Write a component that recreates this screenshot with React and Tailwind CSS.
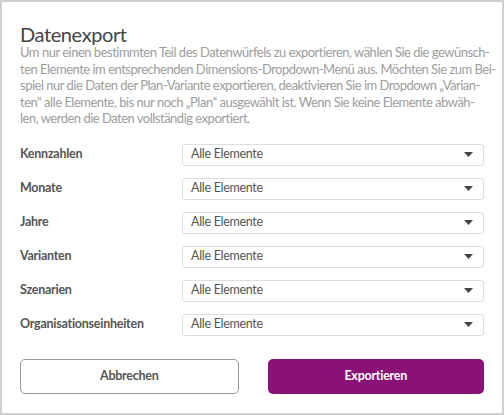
const fields = [
  'Kennzahlen',
  'Monate',
  'Jahre',
  'Varianten',
  'Szenarien',
  'Organisationseinheiten',
];

const intro = [
  'Um nur einen bestimmten Teil des Datenwürfels zu exportieren, wählen Sie die gewünsch-',
  'ten Elemente im entsprechenden Dimensions-Dropdown-Menü aus. Möchten Sie zum Bei-',
  'spiel nur die Daten der Plan-Variante exportieren, deaktivieren Sie im Dropdown „Varian-',
  'ten“ alle Elemente, bis nur noch „Plan“ ausgewählt ist. Wenn Sie keine Elemente abwäh-',
  'len, werden die Daten vollständig exportiert.',
];

function Caret() {
  return (
    <svg width="9" height="5" viewBox="0 0 9 5" className="shrink-0">
      <path d="M0 0 L9 0 L4.5 5 Z" fill="#444" />
    </svg>
  );
}

export default function App() {
  return (
    <div
      className="w-[504px] h-[415px] bg-white border-2 border-[#cfcfcf] px-[18px] pt-[20px]"
      style={{ fontFamily: 'Lato, "Noto Sans", sans-serif' }}
    >
      <h1 className="text-[20px] leading-[24px] tracking-[-0.4px] text-[#444]">Datenexport</h1>
      <div className="-mt-[2px] text-[13px] leading-[16.5px] tracking-[-0.5px] text-[#9d9d9d] whitespace-nowrap">
        {intro.map((line) => (
          <div key={line}>{line}</div>
        ))}
      </div>

      <div className="mt-[17px] flex flex-col gap-[12px]">
        {fields.map((f) => (
          <div key={f} className="flex items-center">
            <span className="w-[162px] text-[12.5px] font-bold tracking-[-0.25px] text-[#555]">{f}</span>
            <button className="flex-1 h-[22px] flex items-center justify-between pl-[8px] pr-[10px] border border-[#dddddd] rounded-[3px] bg-white text-[12.5px] tracking-[-0.3px] text-[#555]">
              <span>Alle Elemente</span>
              <Caret />
            </button>
          </div>
        ))}
      </div>

      <div className="mt-[23px] flex gap-[29px]">
        <button className="flex-1 h-[35px] rounded-[5px] border border-[#999] bg-white text-[12.5px] font-bold tracking-[-0.25px] text-[#555]">
          Abbrechen
        </button>
        <button className="flex-1 h-[35px] rounded-[5px] bg-[#8a1176] text-[12.5px] font-bold tracking-[-0.25px] text-white">
          Exportieren
        </button>
      </div>
    </div>
  );
}
